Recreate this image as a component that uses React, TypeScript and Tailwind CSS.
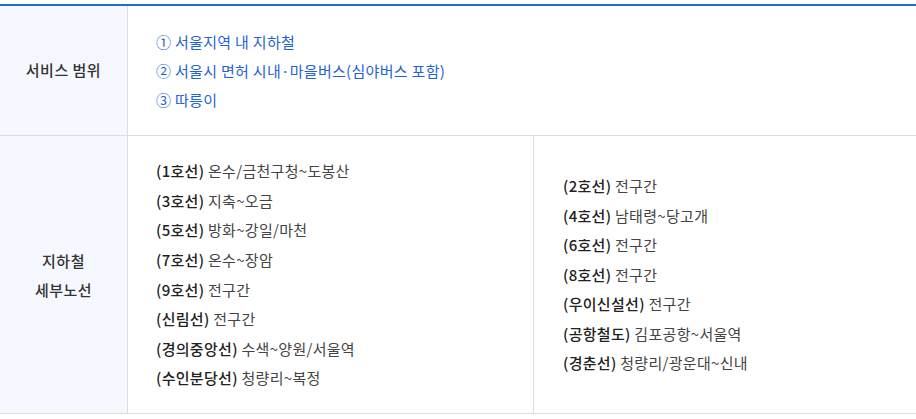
import React from "react";

const left = [
  ["1호선", "온수/금천구청~도봉산"],
  ["3호선", "지축~오금"],
  ["5호선", "방화~강일/마천"],
  ["7호선", "온수~장암"],
  ["9호선", "전구간"],
  ["신림선", "전구간"],
  ["경의중앙선", "수색~양원/서울역"],
  ["수인분당선", "청량리~복정"],
];
const right = [
  ["2호선", "전구간"],
  ["4호선", "남태령~당고개"],
  ["6호선", "전구간"],
  ["8호선", "전구간"],
  ["우이신설선", "전구간"],
  ["공항철도", "김포공항~서울역"],
  ["경춘선", "청량리/광운대~신내"],
];

function Lines({ items }: { items: string[][] }) {
  return (
    <ul className="flex flex-col">
      {items.map(([a, b]) => (
        <li key={a} className="leading-[29.6px] text-[15px] tracking-[0.3px] text-[#444]">
          <span className="font-medium text-[#222]">({a})</span> {b}
        </li>
      ))}
    </ul>
  );
}

export default function App() {
  return (
    <div
      className="w-[916px] h-[419px] bg-white pt-[4px]"
      style={{ fontFamily: '"Noto Sans CJK KR", "Noto Sans", sans-serif' }}
    >
      <div className="border-t-2 border-[#1f6edb] border-b border-b-[#dddddd]">
        <div className="flex h-[130px] border-b border-[#dddddd]">
          <div className="w-[128px] shrink-0 bg-[#f5f8fe] border-r border-[#dddddd] flex items-center justify-center text-[15px] tracking-[0.5px] font-medium text-[#333]">
            서비스 범위
          </div>
          <div className="flex-1 flex flex-col justify-center pl-[28px] text-[15px] tracking-[0.3px] leading-[29px] text-[#1f63d6]">
            <p>① 서울지역 내 지하철</p>
            <p>② 서울시 면허 시내·마을버스(심야버스 포함)</p>
            <p>③ 따릉이</p>
          </div>
        </div>
        <div className="flex h-[277px]">
          <div className="w-[128px] shrink-0 bg-[#f5f8fe] border-r border-[#dddddd] flex flex-col items-center justify-center text-[15px] tracking-[0.5px] leading-[29px] font-medium text-[#333]">
            <p>지하철</p>
            <p>세부노선</p>
          </div>
          <div className="w-[406px] shrink-0 border-r border-[#dddddd] flex flex-col justify-center pl-[28px]">
            <Lines items={left} />
          </div>
          <div className="flex-1 flex flex-col justify-center pl-[29px]">
            <Lines items={right} />
          </div>
        </div>
      </div>
    </div>
  );
}
